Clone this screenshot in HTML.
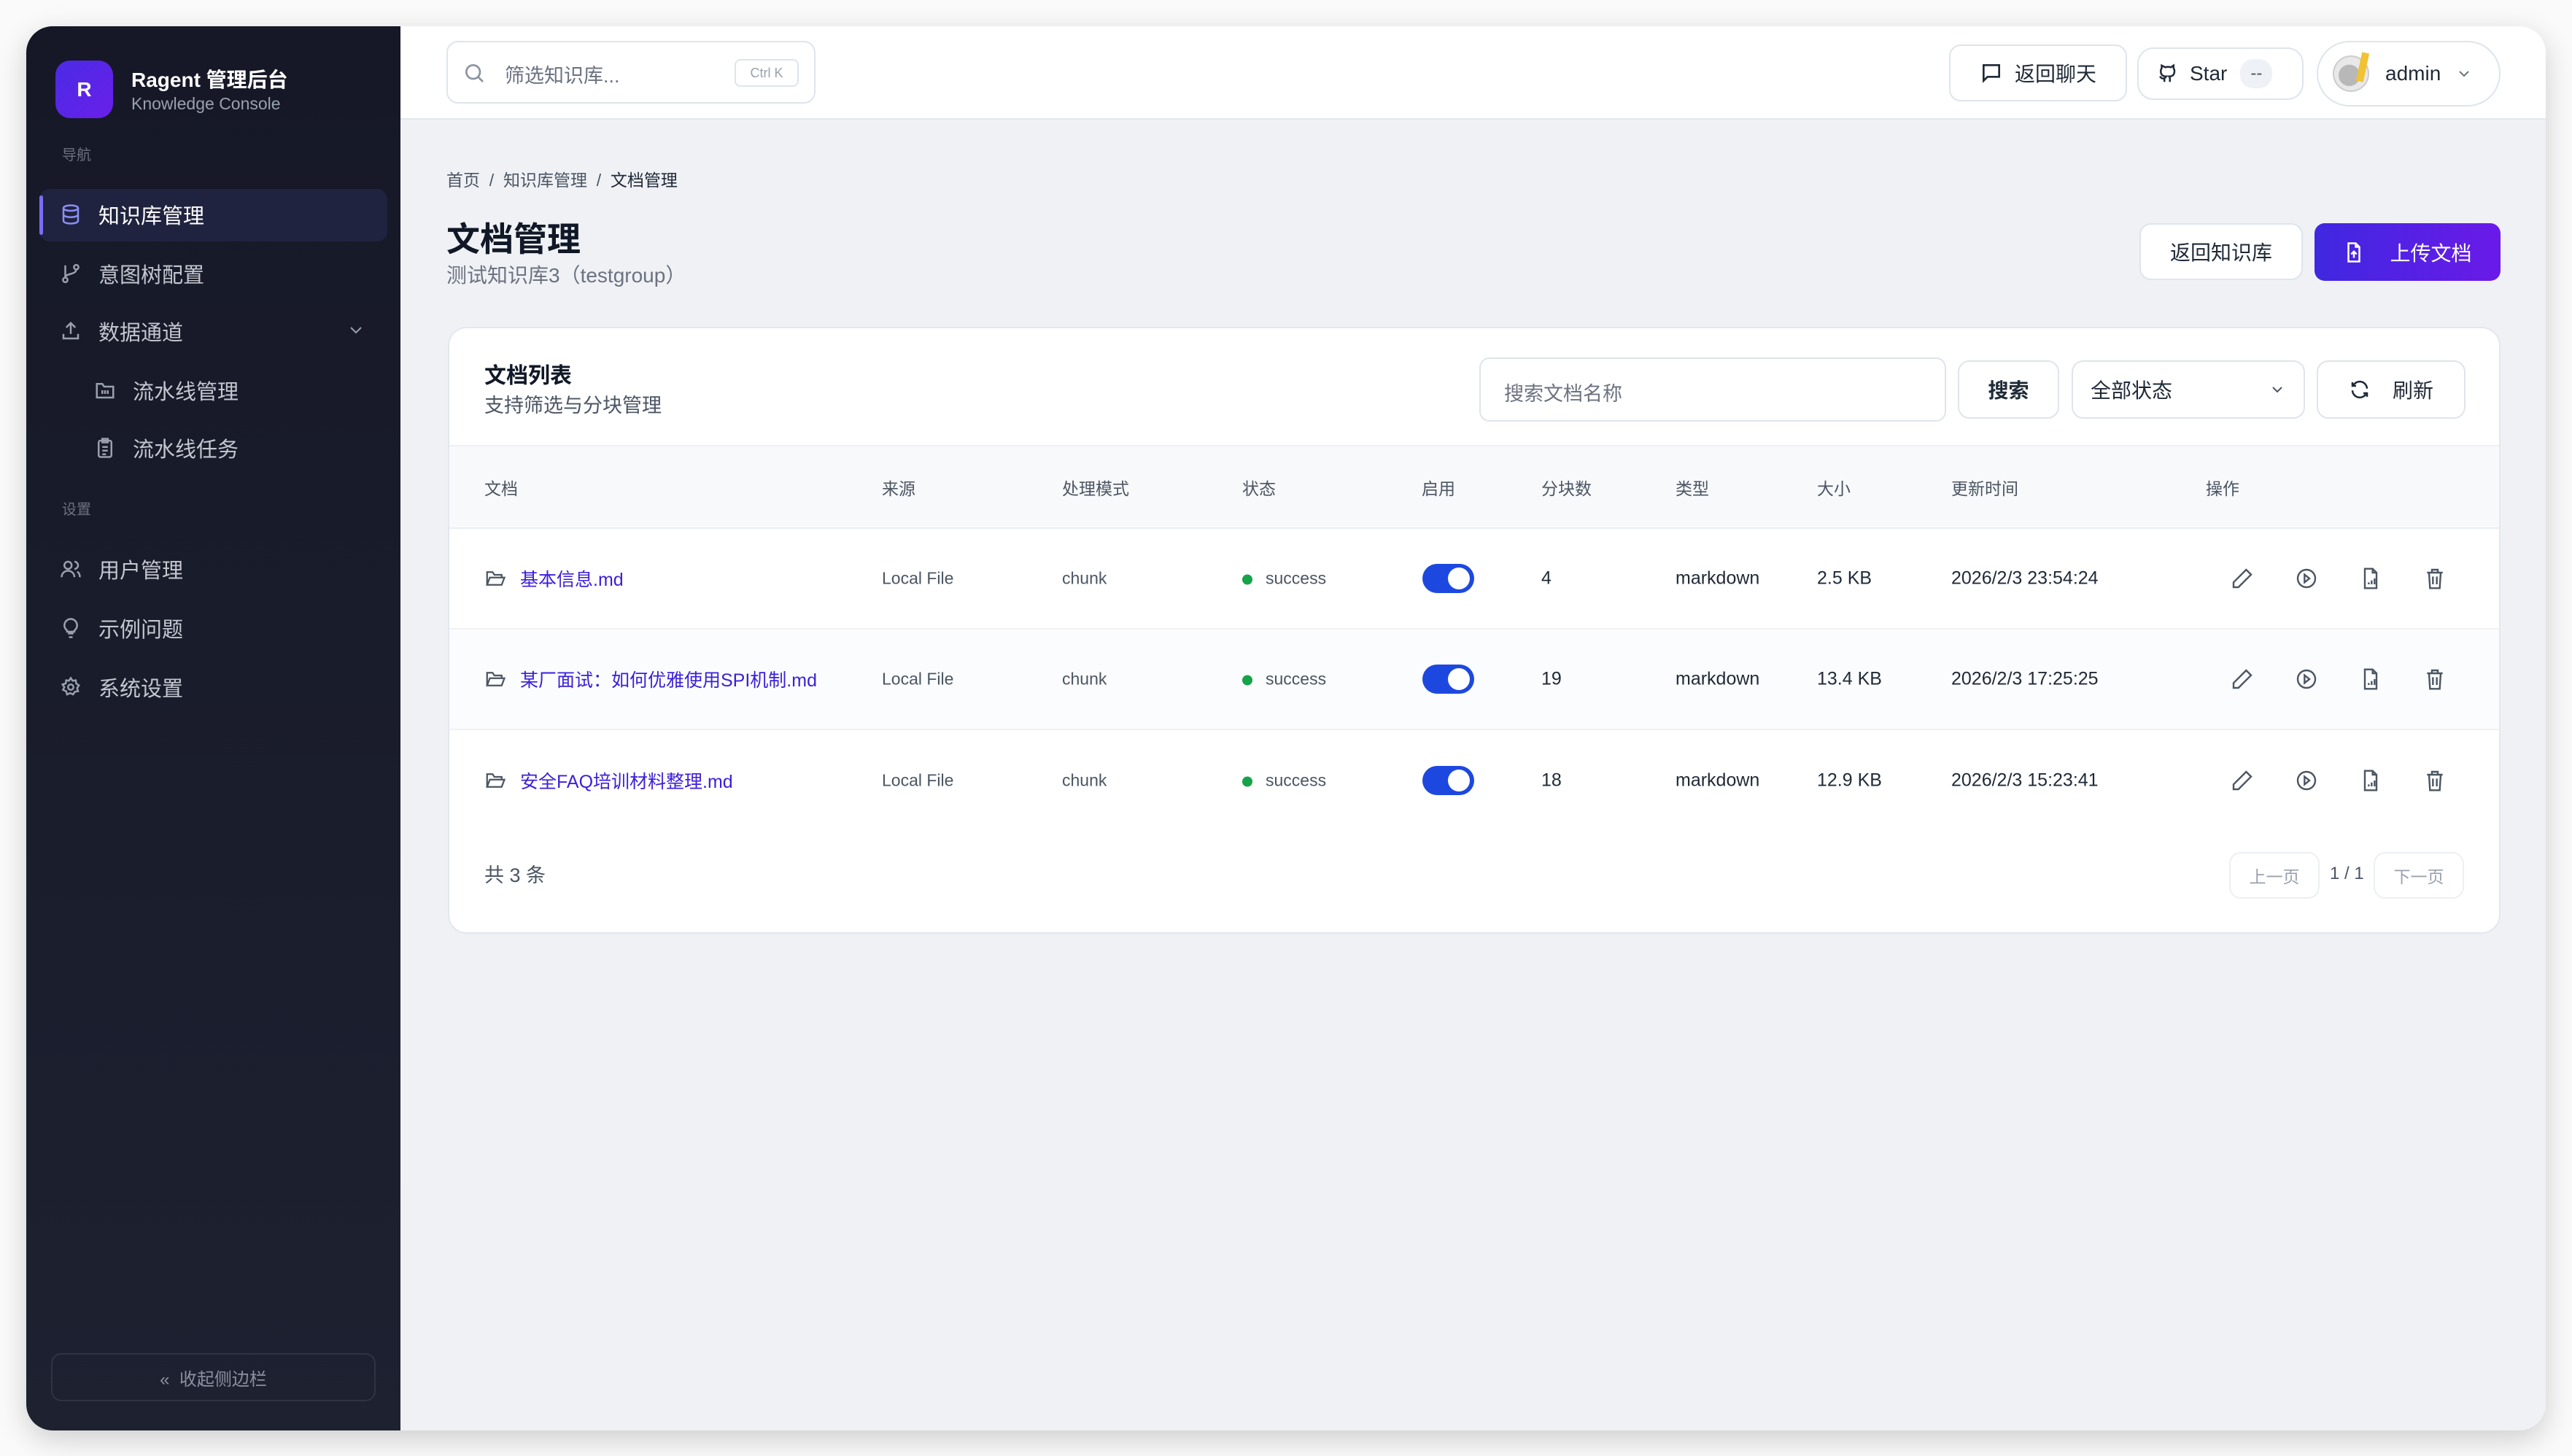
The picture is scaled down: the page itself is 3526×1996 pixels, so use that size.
<!DOCTYPE html>
<html><head><meta charset="utf-8"><style>
*{box-sizing:border-box;margin:0;padding:0}
body{width:3526px;height:1996px;background:#fafafa;font-family:"Liberation Sans","Noto Sans CJK SC",sans-serif;position:relative;overflow:hidden;color:#111827}
.win{position:absolute;left:36px;top:36px;width:3454px;height:1925px;border-radius:36px;overflow:hidden;background:#eff1f5;box-shadow:0 12px 40px rgba(0,0,0,.18)}
.side{position:absolute;left:0;top:0;width:513px;height:100%;background:linear-gradient(#161827,#1d2130)}
.a{position:absolute;white-space:nowrap}
.ni{position:absolute;left:0;font-size:29px;color:#c4c7d0;display:flex;align-items:center}
.ni svg{width:30px;height:30px;margin-right:23px}
.top{position:absolute;left:513px;top:0;right:0;height:128px;background:#fff;border-bottom:2px solid #e3e7ee}
.btn{position:absolute;background:#fff;border:2px solid #dfe4ec;border-radius:16px;display:flex;align-items:center;justify-content:center;font-size:28px;color:#1f2937}
.card{position:absolute;left:578px;top:412px;width:2814px;height:832px;background:#fff;border:2px solid #e3e7ee;border-radius:26px;overflow:hidden}
.th{position:absolute;top:160px;left:0;right:0;height:115px;background:#f8f9fb;border-top:2px solid #eceff3;border-bottom:2px solid #eceff3}
.row{position:absolute;left:0;right:0;height:138px;border-bottom:2px solid #eff1f4}
.c{position:absolute;top:50%;transform:translateY(-50%);white-space:nowrap;font-size:25px;color:#1f2937}
.h{position:absolute;top:50%;transform:translateY(-50%);font-size:23px;color:#4b5563}
.tg{position:absolute;left:1334px;top:50%;margin-top:-20px;width:71px;height:40px;border-radius:20px;background:#1d48e0}
.tg:after{content:"";position:absolute;right:6px;top:5px;width:30px;height:30px;border-radius:50%;background:#fff}
.ic{position:absolute;top:50%;margin-top:-16px;width:32px;height:32px}
.fd{position:absolute;left:48px;top:50%;margin-top:-15px;width:30px;height:30px}
</style></head><body>
<div class="win">
 <div class="side">
  <div class="a" style="left:40px;top:47px;width:79px;height:79px;border-radius:20px;background:linear-gradient(135deg,#4a2be6,#6a1fe8);color:#fff;font-size:28px;font-weight:bold;display:flex;align-items:center;justify-content:center">R</div>
  <div class="a" style="left:144px;top:52px;font-size:28px;color:#fff;font-weight:bold">Ragent 管理后台</div>
  <div class="a" style="left:144px;top:93px;font-size:23px;color:#9aa0ad">Knowledge Console</div>
  <div class="a" style="left:49px;top:160px;font-size:20px;color:#6b7080">导航</div>
  <div class="a" style="left:18px;top:223px;width:477px;height:72px;background:#20233f;border-radius:14px"></div>
  <div class="a" style="left:18px;top:232px;width:5px;height:54px;background:#7c6cf6;border-radius:3px"></div>
  <div class="ni" style="left:46px;top:237px;color:#fff"><svg viewBox="0 0 24 24" fill="none" stroke="#8b8ff5" stroke-width="2"><ellipse cx="12" cy="5" rx="8" ry="3"/><path d="M4 5v14c0 1.7 3.6 3 8 3s8-1.3 8-3V5M4 12c0 1.7 3.6 3 8 3s8-1.3 8-3"/></svg>知识库管理</div>
  <div class="ni" style="left:46px;top:318px"><svg viewBox="0 0 24 24" fill="none" stroke="#9aa0ad" stroke-width="2"><circle cx="6" cy="19" r="2.5"/><circle cx="18" cy="5" r="2.5"/><path d="M6 3v13.5M18 7.5c0 6-12 4-12 9"/></svg>意图树配置</div>
  <div class="ni" style="left:46px;top:397px"><svg viewBox="0 0 24 24" fill="none" stroke="#9aa0ad" stroke-width="2"><path d="M4 15v5h16v-5M12 15V3M7 8l5-5 5 5"/></svg>数据通道</div>
  <svg class="a" style="left:440px;top:404px" width="24" height="24" viewBox="0 0 24 24" fill="none" stroke="#9aa0ad" stroke-width="2"><path d="M5 9l7 7 7-7"/></svg>
  <div class="ni" style="left:93px;top:478px"><svg viewBox="0 0 24 24" fill="none" stroke="#9aa0ad" stroke-width="2"><path d="M3 5h6l2 3h10v12H3z"/><path d="M9 12v4M12 12v4M15 12v4"/></svg>流水线管理</div>
  <div class="ni" style="left:93px;top:557px"><svg viewBox="0 0 24 24" fill="none" stroke="#9aa0ad" stroke-width="2"><rect x="5" y="4" width="14" height="18" rx="2"/><path d="M9 2h6v4H9zM9 11h6M9 15h6M9 19h4"/></svg>流水线任务</div>
  <div class="a" style="left:49px;top:646px;font-size:20px;color:#6b7080">设置</div>
  <div class="ni" style="left:46px;top:723px"><svg viewBox="0 0 24 24" fill="none" stroke="#9aa0ad" stroke-width="2"><circle cx="9" cy="8" r="4"/><path d="M2 21c0-4 3-7 7-7s7 3 7 7M16 4a4 4 0 010 8M19 15c2 1 3 3 3 6"/></svg>用户管理</div>
  <div class="ni" style="left:46px;top:804px"><svg viewBox="0 0 24 24" fill="none" stroke="#9aa0ad" stroke-width="2"><path d="M9 18h6M10 22h4M12 2a7 7 0 00-4 12.7V16h8v-1.3A7 7 0 0012 2z"/></svg>示例问题</div>
  <div class="ni" style="left:46px;top:885px"><svg viewBox="0 0 24 24" fill="none" stroke="#9aa0ad" stroke-width="2"><circle cx="12" cy="12" r="3"/><path d="M12 2l2 3 3.5-.5.5 3.5 3 2-2 3 1 3.5-3.5.5-2 3-3-1.5L8 20l-1-3.5L3.5 15 5 12 3 9l3.5-1L7 4.5 10 5z"/></svg>系统设置</div>
  <div class="a" style="left:34px;top:1819px;width:445px;height:66px;border:2px solid #2f3342;border-radius:14px;display:flex;align-items:center;justify-content:center;font-size:24px;color:#8b90a0">« &nbsp;收起侧边栏</div>
 </div>
 <div class="top">
  <div class="a" style="left:63px;top:20px;width:506px;height:86px;border:2px solid #dfe4ec;border-radius:16px">
   <svg class="a" style="left:20px;top:26px" width="32" height="32" viewBox="0 0 24 24" fill="none" stroke="#8b93a1" stroke-width="2"><circle cx="11" cy="11" r="7"/><path d="M16 16l5 5"/></svg>
   <div class="a" style="left:78px;top:24px;font-size:27px;color:#6b7280">筛选知识库...</div>
   <div class="a" style="left:393px;top:23px;width:88px;height:38px;border:2px solid #dfe4ec;border-radius:8px;font-size:18px;color:#9aa0ad;display:flex;align-items:center;justify-content:center">Ctrl K</div>
  </div>
  <div class="btn" style="left:2123px;top:25px;width:244px;height:78px"><svg width="32" height="32" viewBox="0 0 24 24" fill="none" stroke="#1f2937" stroke-width="2" style="margin-right:16px"><path d="M4 4h16v12H8l-4 4z"/></svg>返回聊天</div>
  <div class="btn" style="left:2381px;top:29px;width:228px;height:72px;border-radius:22px;justify-content:flex-start;padding-left:24px"><svg width="30" height="30" viewBox="0 0 24 24" fill="none" stroke="#1f2937" stroke-width="2" style="margin-right:16px"><path d="M9 21v-4c-3 1-4-1-5-2M15 21v-4a3 3 0 00-1-2c3 0 6-1 6-6a5 5 0 00-1-3V3l-3 2a10 10 0 00-6 0L6 3v3a5 5 0 00-1 3c0 5 3 6 6 6a3 3 0 00-1 2"/></svg>Star<span style="margin-left:18px;background:#eef1f5;border-radius:18px;padding:6px 14px;font-size:24px;color:#4b5563">--</span></div>
  <div class="btn" style="left:2627px;top:20px;width:252px;height:90px;border-radius:45px;justify-content:flex-start;padding-left:20px"><div style="width:50px;height:50px;border-radius:50%;background:radial-gradient(circle at 45% 55%,#b8b8b8 40%,#e8e8e8 42%);border:2px solid #ccc;margin-right:22px;position:relative"><div style="position:absolute;right:2px;top:-6px;width:10px;height:40px;background:#f1c232;transform:rotate(12deg)"></div></div>admin<svg width="24" height="24" viewBox="0 0 24 24" fill="none" stroke="#6b7280" stroke-width="2" style="margin-left:20px"><path d="M6 9l6 6 6-6"/></svg></div>
 </div>
 <div class="a" style="left:576px;top:192px;font-size:23px;color:#4b5563">首页 &nbsp;/ &nbsp;知识库管理 &nbsp;/ &nbsp;<span style="color:#1f2937">文档管理</span></div>
 <div class="a" style="left:576px;top:256px;font-size:46px;font-weight:bold;color:#111827">文档管理</div>
 <div class="a" style="left:576px;top:320px;font-size:28px;color:#6b7280">测试知识库3（testgroup）</div>
 <div class="btn" style="left:2897px;top:270px;width:224px;height:78px;font-size:28px">返回知识库</div>
 <div class="a" style="left:3137px;top:270px;width:255px;height:79px;border-radius:14px;background:linear-gradient(90deg,#3f28e0,#6a1ae8);color:#fff;font-size:28px;display:flex;align-items:center;justify-content:center"><svg width="30" height="30" viewBox="0 0 24 24" fill="none" stroke="#fff" stroke-width="2" style="margin-right:34px"><path d="M14 2H6v20h12V6zM14 2v4h4M12 18v-6M9 14l3-3 3 3"/></svg>上传文档</div>
 <div class="card">
  <div class="a" style="left:48px;top:40px;font-size:30px;font-weight:bold">文档列表</div>
  <div class="a" style="left:48px;top:84px;font-size:27px;color:#4b5563">支持筛选与分块管理</div>
  <div class="a" style="left:1412px;top:40px;width:640px;height:88px;border:2px solid #dfe4ec;border-radius:14px;font-size:27px;color:#6b7280;padding:26px 0 0 32px">搜索文档名称</div>
  <div class="btn" style="left:2068px;top:44px;width:139px;height:80px;font-weight:bold">搜索</div>
  <div class="btn" style="left:2224px;top:44px;width:320px;height:80px;justify-content:flex-start;padding-left:24px">全部状态<svg width="24" height="24" viewBox="0 0 24 24" fill="none" stroke="#4b5563" stroke-width="2" style="position:absolute;right:24px"><path d="M6 9l6 6 6-6"/></svg></div>
  <div class="btn" style="left:2560px;top:44px;width:204px;height:80px"><svg width="30" height="30" viewBox="0 0 24 24" fill="none" stroke="#1f2937" stroke-width="2" style="margin-right:30px"><path d="M20 11a8 8 0 00-14-5L4 8M4 4v4h4M4 13a8 8 0 0014 5l2-2M20 20v-4h-4"/></svg>刷新</div>
  <div class="th">
   <div class="h" style="left:48px">文档</div><div class="h" style="left:593px">来源</div><div class="h" style="left:840px">处理模式</div><div class="h" style="left:1087px">状态</div><div class="h" style="left:1333px">启用</div><div class="h" style="left:1497px">分块数</div><div class="h" style="left:1681px">类型</div><div class="h" style="left:1875px">大小</div><div class="h" style="left:2059px">更新时间</div><div class="h" style="left:2408px">操作</div>
  </div>
  <div class="row" style="top:275px"><div class="c" style="left:97px;color:#3b1fd9">基本信息.md</div></div>
  <div class="row" style="top:413px;background:#fbfcfe"><div class="c" style="left:97px;color:#3b1fd9">某厂面试：如何优雅使用SPI机制.md</div></div>
  <div class="row" style="top:551px;border:none"><div class="c" style="left:97px;color:#3b1fd9">安全FAQ培训材料整理.md</div></div>
  <div class="a" style="left:48px;top:728px;font-size:27px;color:#4b5563">共 3 条</div>
  <div class="btn" style="left:2440px;top:718px;width:124px;height:64px;font-size:23px;color:#9aa0ad;border-color:#eceff3">上一页</div>
  <div class="a" style="left:2578px;top:734px;font-size:24px;color:#4b5563">1 / 1</div>
  <div class="btn" style="left:2638px;top:718px;width:124px;height:64px;font-size:23px;color:#9aa0ad;border-color:#eceff3">下一页</div>
 </div>
</div>
<script>
var d=[["4","2.5 KB","2026/2/3 23:54:24"],["19","13.4 KB","2026/2/3 17:25:25"],["18","12.9 KB","2026/2/3 15:23:41"]];
var rows=document.querySelectorAll('.row');
var ic='<svg class="ic" style="left:L" viewBox="0 0 24 24" fill="none" stroke="#4b5563" stroke-width="1.8">P</svg>';
var paths=['<path d="M16 3l5 5L8 21H3v-5z"/>','<circle cx="12" cy="12" r="9"/><path d="M10 8l5 4-5 4z"/>','<path d="M14 2H6v20h12V6zM14 2v4h4M10 18v-2M13 18v-4M16 18v-6"/>','<path d="M4 6h16M9 6V3h6v3M6 6l1 16h10l1-16M10 10v8M14 10v8"/>'];
rows.forEach(function(r,i){var h='<svg class="fd" viewBox="0 0 24 24" fill="none" stroke="#4b5563" stroke-width="1.8"><path d="M3 19V5h6l2 3h8v3"/><path d="M3 19l3-8h16l-3 8z"/></svg><div class="c" style="left:593px;font-size:23px;color:#4b5563">Local File</div><div class="c" style="left:840px;font-size:23px;color:#4b5563">chunk</div><div class="c" style="left:1087px;font-size:23px;color:#4b5563"><span style="display:inline-block;width:14px;height:14px;border-radius:50%;background:#16a34a;margin-right:18px;vertical-align:middle"></span>success</div><div class="tg"></div><div class="c" style="left:1497px">'+d[i][0]+'</div><div class="c" style="left:1681px">markdown</div><div class="c" style="left:1875px">'+d[i][1]+'</div><div class="c" style="left:2059px">'+d[i][2]+'</div>';
[2442,2530,2618,2706].forEach(function(x,j){h+=ic.replace('L',x+'px').replace('P',paths[j]);});r.innerHTML+=h;});
</script>
</body></html>
